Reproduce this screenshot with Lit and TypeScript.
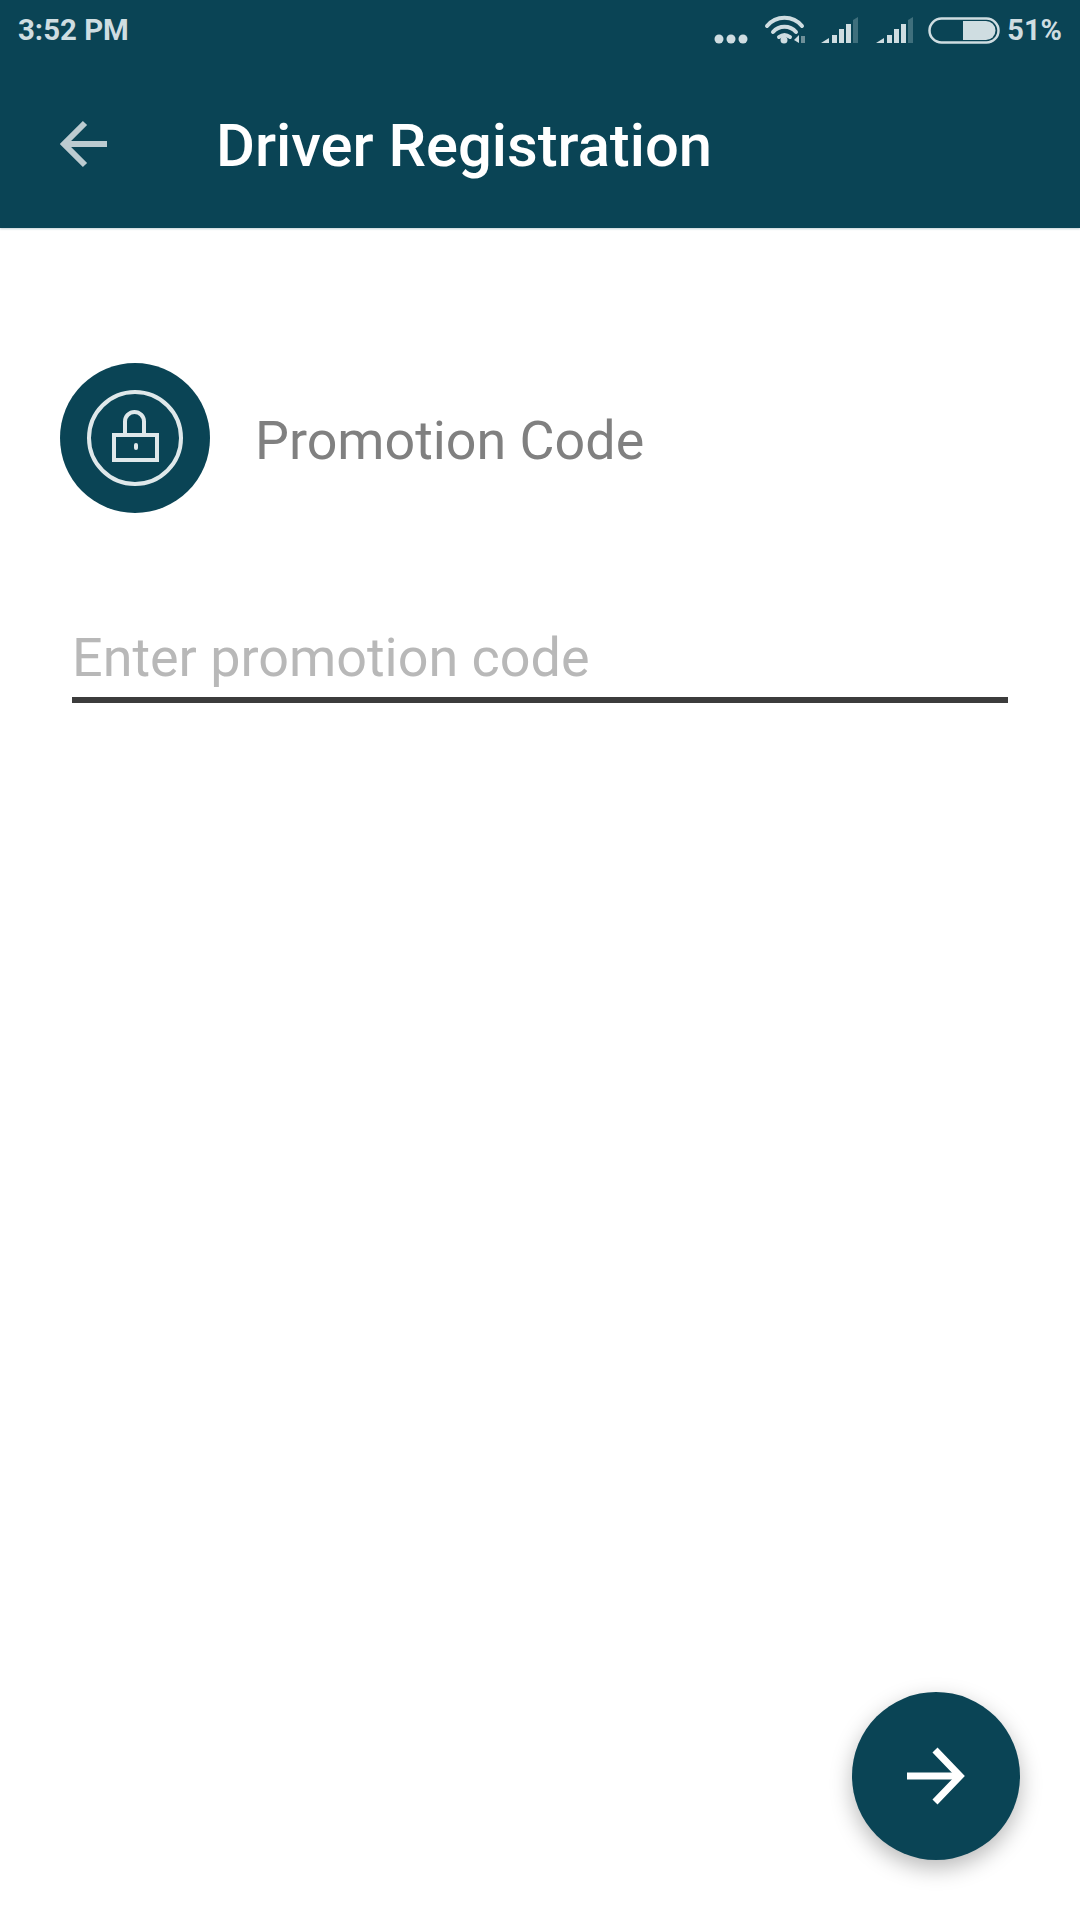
import { LitElement, html, css } from "lit";
import { customElement } from "lit/decorators.js";

@customElement("app-root")
export class AppRoot extends LitElement {
  static styles = css`
    :host { display: block; position: relative; width: 1080px; height: 1920px; background: #fff; font-family: Roboto, "Noto Sans", sans-serif; overflow: hidden; }
    .header { background: #0a4455; height: 228px; box-shadow: 0 1px 2px rgba(11,69,85,.25); display: flex; flex-direction: column; }
    .status { height: 60px; display: flex; align-items: center; padding: 0 18px 0 18px; color: #cfdde1; font-weight: 700; font-size: 29px; }
    .time { flex: 1; font-size: 29.4px; }
    .status svg { display: block; }
    .status-icons { display: flex; align-items: center; }
    .pct { margin-left: 5px; }
    .bar { flex: 1; display: flex; align-items: center; padding: 0 0 0 60px; }
    .back { width: 49px; height: 48px; display: block; }
    .title { margin-left: 107px; padding-top: 4px; color: #fff; font-size: 59.7px; font-weight: 500; white-space: nowrap; }
    .row { display: flex; align-items: center; margin: 135px 0 0 60px; }
    .badge { width: 150px; height: 150px; border-radius: 50%; background: #0a4455; display: block; }
    .label { margin-left: 45px; margin-top: 4px; font-size: 53.8px; color: #808080; white-space: nowrap; }
    .field { margin: 108px 72px 0 72px; height: 76px; border-bottom: 6px solid #3c3c3c; display: flex; align-items: flex-start; }
    .placeholder { padding-top: 4px; font-size: 53.9px; line-height: 66px; color: #b8b8b8; white-space: nowrap; }
    .fab { position: absolute; left: 852px; top: 1692px; width: 168px; height: 168px; border-radius: 50%; background: #0a4455; box-shadow: 0 8px 22px rgba(0,0,0,.28); display: flex; align-items: center; justify-content: center; }
    .fab svg { display: block; }
  `;

  render() {
    return html`
      <div class="header">
        <div class="status">
          <span class="time">3:52 PM</span>
          <div class="status-icons">
            <svg width="292" height="60" viewBox="710 0 292 60">
              <g fill="#cfdde1">
                <circle cx="719" cy="39" r="4.5"/><circle cx="731" cy="39" r="4.5"/><circle cx="743" cy="39" r="4.5"/>
              </g>
              <g fill="none" stroke="#cfdde1" stroke-width="4" stroke-linecap="round">
                <path d="M767 26 C776 15 793 15 802 26"/>
                <path d="M773 32 C779 25 790 25 796 32"/>
                <path d="M779 37 C783 34 786 34 790 37"/>
              </g>
              <circle cx="784" cy="40" r="3.5" fill="#cfdde1"/>
              <path d="M794 40 L799 35 V43 H799Z" fill="#cfdde1"/>
              <path d="M801 36 h4 v7 h-4z" fill="#6f9099"/>
              <path d="M821 43 L829 38 V43 Z M832 35 h5 v8 h-5z M839 29 h5 v14 h-5z M846 24 h5 v19 h-5z" fill="#cfdde1"/>
              <path d="M853 20 L858 17 V43 h-5z" fill="#3f6f7c"/>
              <path d="M876 43 L884 38 V43 Z M887 35 h5 v8 h-5z M894 29 h5 v14 h-5z M901 24 h5 v19 h-5z" fill="#cfdde1"/>
              <path d="M908 20 L913 17 V43 h-5z" fill="#3f6f7c"/>
              <rect x="929.5" y="18.5" width="69" height="24" rx="12" fill="none" stroke="#cfdde1" stroke-width="2.5"/>
              <path d="M963 21 H986 a9.5 9.5 0 0 1 0 19 H963z" fill="#cfdde1"/>
            </svg>
            <span class="pct">51%</span>
          </div>
        </div>
        <div class="bar">
          <svg class="back" viewBox="0 0 49 48" fill="none" stroke="#bccbd0" stroke-width="6">
            <path d="M47 24 H3"/><path d="M25 3 L4 24 L25 45"/>
          </svg>
          <span class="title">Driver Registration</span>
        </div>
      </div>
      <div class="row">
        <svg class="badge" viewBox="0 0 150 150" fill="none" stroke="#dfe8ea">
          <circle cx="75" cy="75" r="46" stroke-width="4"/>
          <rect x="54" y="72" width="43" height="25" stroke-width="4"/>
          <path d="M65 72 V58.5 a9.5 9.5 0 0 1 19 0 V72" stroke-width="4"/>
          <path d="M76 82 v3" stroke-width="4" stroke-linecap="round"/>
        </svg>
        <span class="label">Promotion Code</span>
      </div>
      <div class="field"><span class="placeholder">Enter promotion code</span></div>
      <div class="fab">
        <svg width="60" height="60" viewBox="0 0 60 60" fill="none" stroke="#fff" stroke-width="7">
          <path d="M1 30 H53"/><path d="M29 4 L54 30 L29 56"/>
        </svg>
      </div>
    `;
  }
}
